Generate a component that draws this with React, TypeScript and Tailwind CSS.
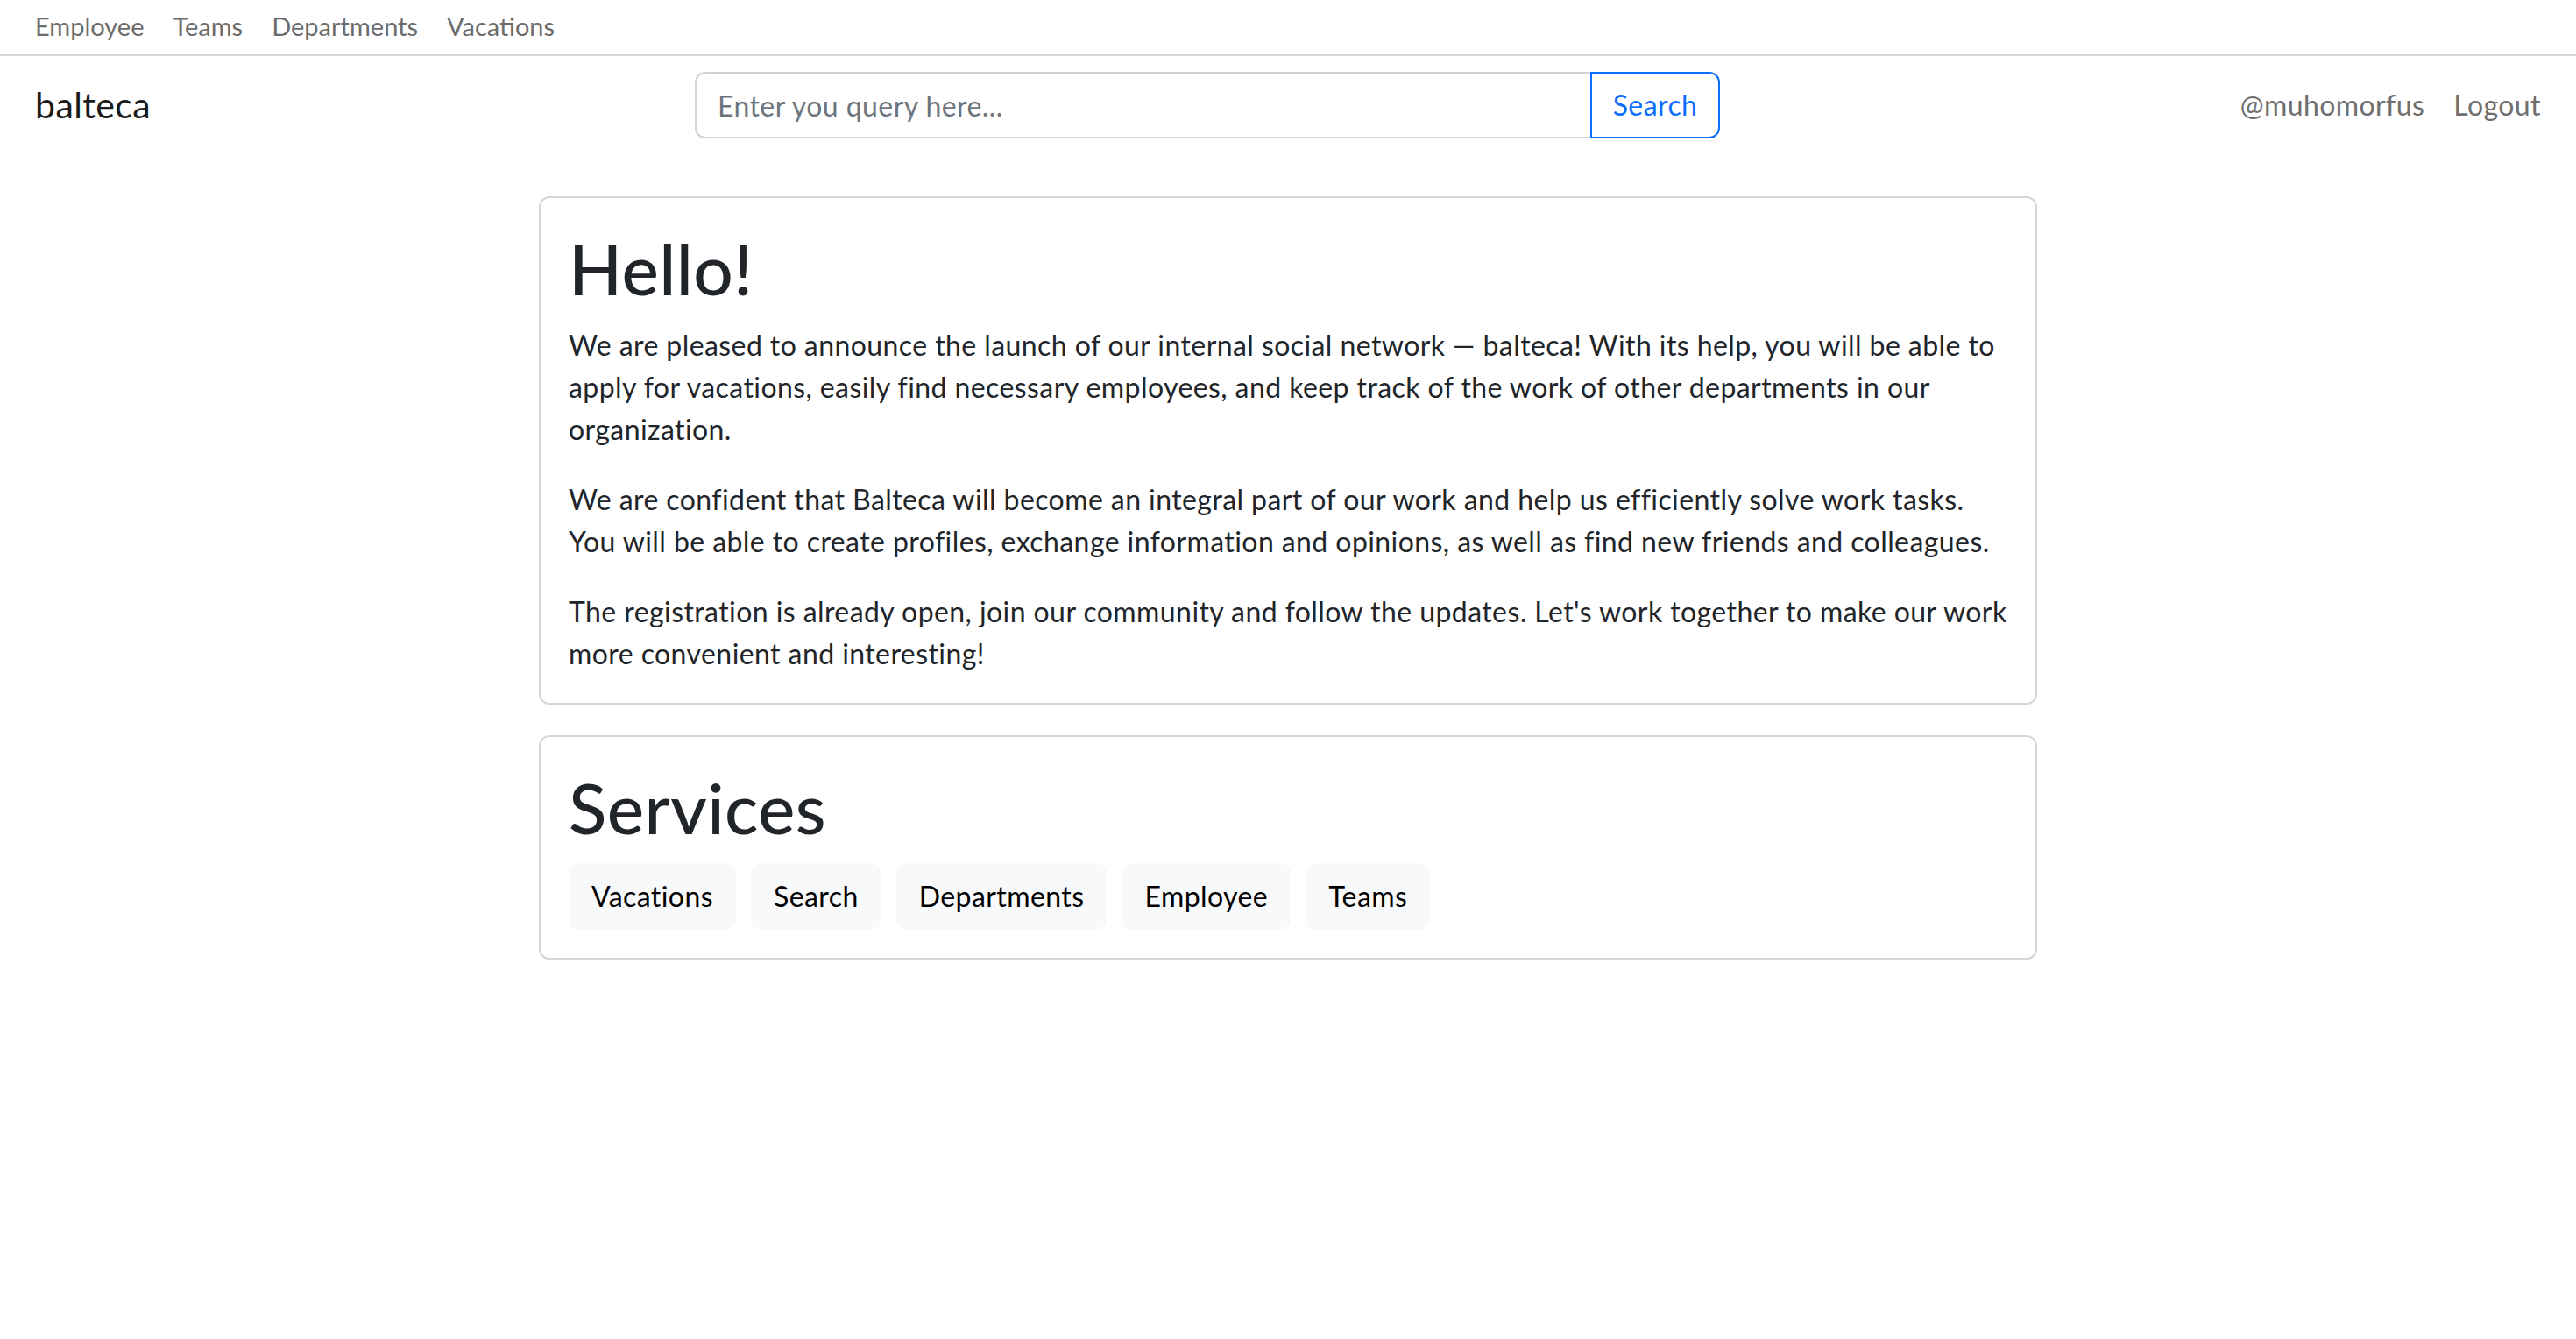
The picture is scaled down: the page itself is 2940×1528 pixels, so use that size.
const topLinks = ['Employee', 'Teams', 'Departments', 'Vacations'];
const services = ['Vacations', 'Search', 'Departments', 'Employee', 'Teams'];

function App() {
  return (
    <div className="min-h-screen bg-white font-['Lato','Liberation_Sans',sans-serif] tracking-[0.42px] text-[#212529]">
      {/* top links */}
      <div className="flex h-[64px] items-center gap-[33px] border-b-2 border-[#d4d8dc] px-[40px] pb-[2px] text-[29px] tracking-normal text-[#6c6c6c]">
        {topLinks.map((l) => (
          <a key={l} className="leading-[44px]">
            {l}
          </a>
        ))}
      </div>

      {/* main navbar */}
      <div className="flex items-center px-[40px] py-[18px]">
        <div className="w-[753px] shrink-0 text-[41px] leading-[60px] text-[#1a1a1a]">balteca</div>
        <div className="flex h-[76px] w-[1170px]">
          <input
            className="h-full flex-1 rounded-l-[12px] border-2 border-r-0 border-[#ced4da] px-[24px] text-[32px] text-[#212529] outline-none placeholder:text-[#6c757d]"
            placeholder="Enter you query here..."
          />
          <button className="h-full w-[148px] rounded-r-[12px] border-2 border-[#0d6efd] text-[32px] text-[#0d6efd]">
            Search
          </button>
        </div>
        <div className="flex flex-1 justify-end gap-[33px] text-[32px] text-[#6f6f6f]">
          <a>@muhomorfus</a>
          <a>Logout</a>
        </div>
      </div>

      {/* content */}
      <div className="mx-auto mt-[48px] flex w-[1710px] flex-col gap-[35px]">
        <div className="rounded-[12px] border-2 border-[#d6d6d6] p-[32px]">
          <h1 className="mb-[16px] text-[80px] font-medium leading-[96px]">Hello!</h1>
          <div className="flex flex-col gap-[32px] whitespace-nowrap text-[32px] leading-[48px]">
            <p>
              We are pleased to announce the launch of our internal social network — balteca! With its help, you will be able to
              <br />
              apply for vacations, easily find necessary employees, and keep track of the work of other departments in our
              <br />
              organization.
            </p>
            <p>
              We are confident that Balteca will become an integral part of our work and help us efficiently solve work tasks.
              <br />
              You will be able to create profiles, exchange information and opinions, as well as find new friends and colleagues.
            </p>
            <p>
              The registration is already open, join our community and follow the updates. Let's work together to make our work
              <br />
              more convenient and interesting!
            </p>
          </div>
        </div>

        <div className="rounded-[12px] border-2 border-[#d6d6d6] p-[32px]">
          <h1 className="mb-[16px] text-[80px] font-medium leading-[96px]">Services</h1>
          <div className="flex gap-[17px]">
            {services.map((s) => (
              <button
                key={s}
                className="rounded-[12px] border-2 border-[#f8f9fa] bg-[#f8f9fa] px-[24px] py-[12px] text-[32px] leading-[48px] text-black"
              >
                {s}
              </button>
            ))}
          </div>
        </div>
      </div>
    </div>
  );
}

export default App;
